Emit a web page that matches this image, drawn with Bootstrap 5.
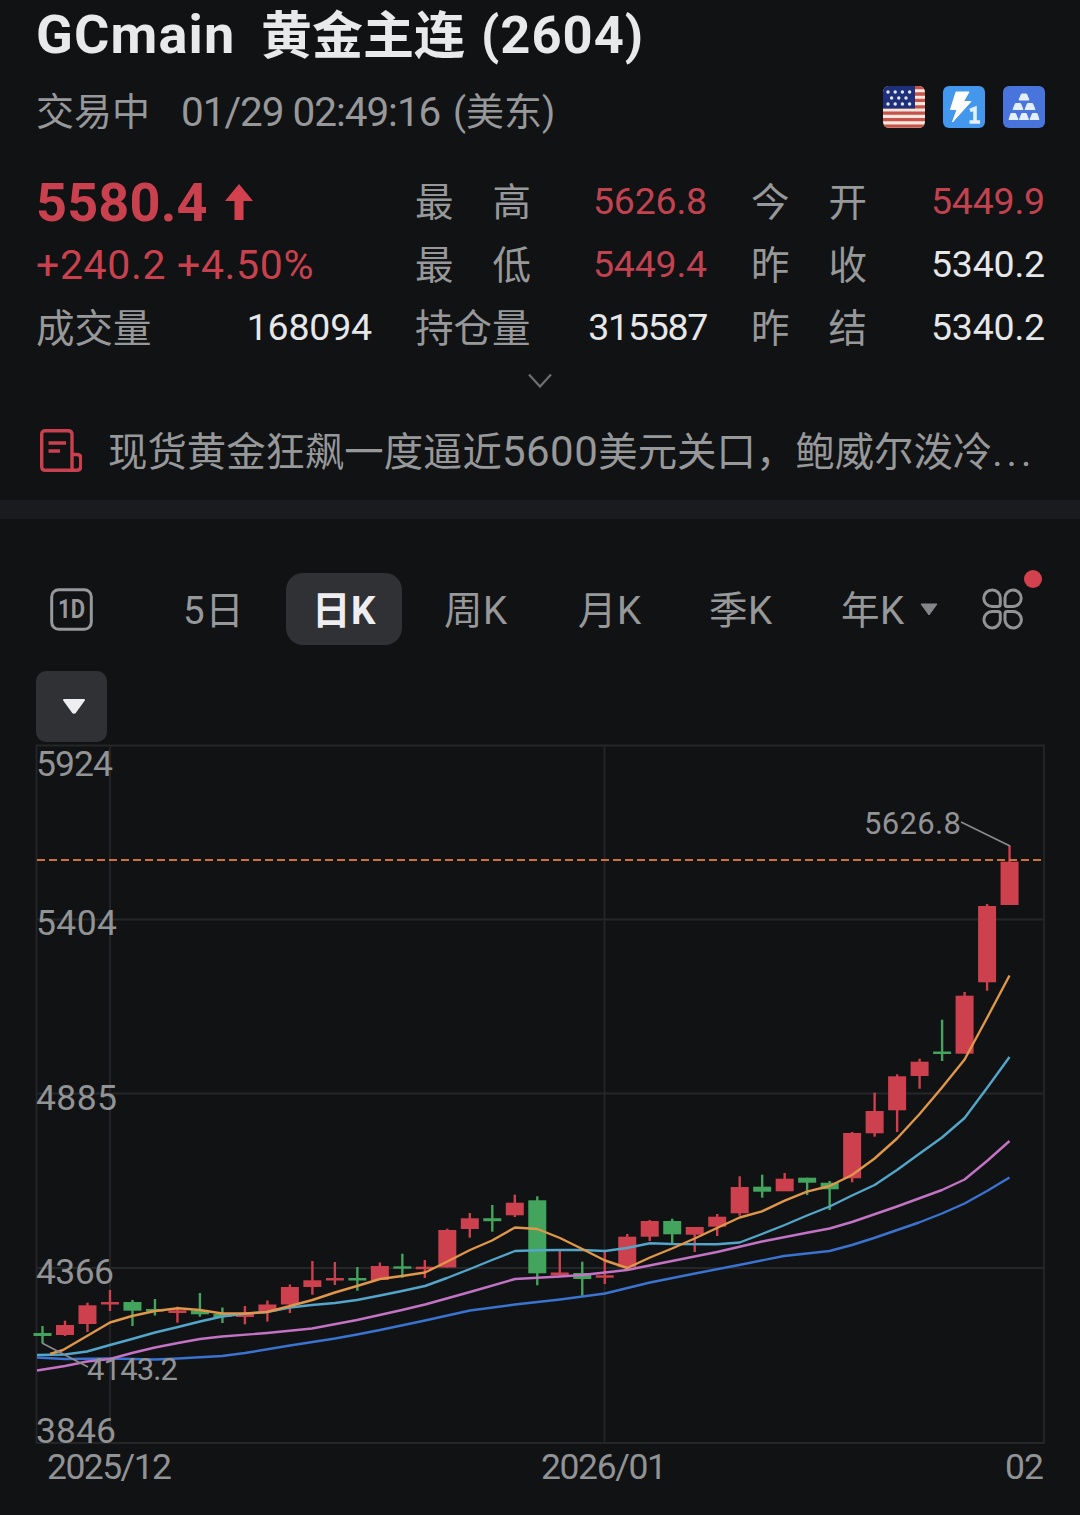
<!DOCTYPE html>
<html lang="zh-CN" data-bs-theme="dark">
<head>
<meta charset="utf-8">
<meta name="viewport" content="width=device-width, initial-scale=1">
<title>GCmain 黄金主连</title>
<link href="https://cdn.jsdelivr.net/npm/bootstrap@5.3.0/dist/css/bootstrap.min.css" rel="stylesheet">
<style>
  body { background: #111214; color: #97989a; font-family: Roboto, "Noto Sans CJK SC", sans-serif; font-size: 38.5px; overflow: hidden; }
  .quote-page { width: 1080px; height: 1515px; overflow: hidden; }
  .side-pad { padding-left: 36px; padding-right: 35px; }
  .title-line { height: 72px; line-height: 73px; font-size: 51px; color: #e8e9eb; white-space: pre; }
  .t-code { letter-spacing: 1.2px; width: 225px; font-size: 54px; line-height: 70px; }
  .t-num { letter-spacing: 1px; margin-left: 16px; font-size: 52.5px; line-height: 70px; }
  .status-line { height: 80px; line-height: 80px; font-size: 38px; white-space: pre; }
  .t-time { margin-left: 31px; font-size: 40.5px; letter-spacing: -1.05px; width: 272px; }
  .mkt-icons { gap: 18px; margin-top: 14px; }
  .mkt-icons svg { display: block; }
  .stats { margin-top: 19px; }
  .stat-row { height: 63px; line-height: 63px; }
  .c1 { width: 336px; margin-right: 43px; }
  .c2 { width: 292px; margin-right: 44px; }
  .c3 { width: 294px; }
  .lbl { width: 116px; }
  .up { color: #c9414f; }
  .val { font-size: 37.5px; letter-spacing: -.2px; line-height: 60px; color: #e6e7e9; }
  .val.up { color: #c14250; }
  .val.tight { letter-spacing: -1.3px; }
  .price { font-size: 54px; letter-spacing: .2px; }
  .chg { font-size: 41px; letter-spacing: .65px; white-space: pre; }
  .arrow-up { margin-bottom: 2px; margin-left: 16px; }
  .fold { height: 42px; padding-top: 13px; }
  .news { height: 98px; line-height: 60px; padding-top: 20px; }
  .news-icon { margin-top: 7px; }
  .news-txt { margin-left: 26px; font-size: 39.4px; white-space: nowrap; }
  .news-num { font-size: 42px; letter-spacing: .5px; }
  .news-dots { letter-spacing: 4px; }
  .split { height: 19px; background: #1a1b1e; }
  .tabs { height: 72px; margin-top: 54px; font-size: 38.5px; }
  .k { padding-top: 4px; line-height: 68px; letter-spacing: .5px; }
  .k svg { margin-bottom: 4px; margin-right: 42px; }
  .tab-on { width: 116px; height: 72px; border-radius: 17px; background: #303135; color: #eeeef0; }
  .drop { width: 71px; height: 71px; margin-top: 26px; border-radius: 10px; background: #303135; }
  .chart { display: block; }
  .chart text { font-size: 35.5px; fill: #929395; }
  .chart .extreme { font-size: 31px; }
  .dot { width: 18px; height: 18px; right: 2px; top: -3px; background: #d3414f; }
</style>
<script src="https://cdn.jsdelivr.net/npm/bootstrap@5.3.0/dist/js/bootstrap.bundle.min.js"></script>
</head>
<body>
<main class="quote-page d-flex flex-column">
  <header class="side-pad">
    <div class="title-line d-flex fw-bold"><span class="t-code">GCmain</span><span>黄金主连</span><span class="t-num">(2604)</span></div>
    <div class="status-line d-flex align-items-start justify-content-between">
      <div class="d-flex"><span>交易中</span><span class="t-time">01/29 02:49:16</span><span>(美东)</span></div>
      <div class="mkt-icons d-flex">
        <svg width="42" height="42" viewBox="0 0 42 42"><defs><clipPath id="fl"><rect width="42" height="42" rx="6"/></clipPath></defs>
          <g clip-path="url(#fl)"><rect width="42" height="42" fill="#f5e6df"/>
          <path d="M0 1.6H42M0 8H42M0 14.4H42M0 20.8H42M0 27.2H42M0 33.6H42M0 40.2H42" stroke="#c65349" stroke-width="3.3"/>
          <rect width="32" height="22.5" fill="#1d3079"/>
          <g fill="#e4e9f6"><circle cx="5" cy="6" r="1.7"/><circle cx="12.2" cy="6" r="1.7"/><circle cx="19.4" cy="6" r="1.7"/><circle cx="26.6" cy="6" r="1.7"/><circle cx="8.6" cy="12" r="1.7"/><circle cx="15.8" cy="12" r="1.7"/><circle cx="23" cy="12" r="1.7"/><circle cx="5" cy="18" r="1.7"/><circle cx="12.2" cy="18" r="1.7"/><circle cx="19.4" cy="18" r="1.7"/><circle cx="26.6" cy="18" r="1.7"/></g></g></svg>
        <svg width="42" height="42" viewBox="0 0 42 42"><rect width="42" height="42" rx="6" fill="#4397ec"/><path d="M13 6H26L20.500 15.500H28L9.500 36L14 23.500H7.500Z" fill="#fff" stroke="#fff" stroke-linejoin="round"/><path d="M27 24.500L32 22.500V36M26.500 36H37" fill="none" stroke="#e4f1fd" stroke-width="3.600"/></svg>
        <svg width="42" height="42" viewBox="0 0 42 42"><rect width="42" height="42" rx="6" fill="#4874db"/><g fill="#e3f0fc" stroke="#e3f0fc" stroke-linejoin="round"><path id="bar" d="M18.500 8H23.500L26 14H16Z"/><use href="#bar" x="-6" y="9.500"/><use href="#bar" x="6" y="9.500"/><path d="M8 27.500H12.500L15 33.500H6ZM18.800 27.500H23.200L25.500 33.500H16.500ZM29.500 27.500H34L36 33.500H27Z"/></g></svg>
      </div>
    </div>
  </header>

  <section class="stats side-pad">
    <div class="stat-row d-flex">
      <div class="c1 d-flex align-items-center"><span class="price up fw-bold">5580.4</span>
        <svg class="arrow-up" width="30" height="38" viewBox="0 0 30 38"><path d="M15 1L29 18H19.500V37H10.500V18H1Z" fill="#d3414f"/></svg></div>
      <div class="c2 d-flex justify-content-between"><span class="lbl d-flex justify-content-between"><span>最</span><span>高</span></span><span class="val up">5626.8</span></div>
      <div class="c3 d-flex justify-content-between"><span class="lbl d-flex justify-content-between"><span>今</span><span>开</span></span><span class="val up">5449.9</span></div>
    </div>
    <div class="stat-row d-flex">
      <div class="c1"><span class="chg up">+240.2 +4.50%</span></div>
      <div class="c2 d-flex justify-content-between"><span class="lbl d-flex justify-content-between"><span>最</span><span>低</span></span><span class="val up">5449.4</span></div>
      <div class="c3 d-flex justify-content-between"><span class="lbl d-flex justify-content-between"><span>昨</span><span>收</span></span><span class="val">5340.2</span></div>
    </div>
    <div class="stat-row d-flex">
      <div class="c1 d-flex justify-content-between"><span>成交量</span><span class="val">168094</span></div>
      <div class="c2 d-flex justify-content-between"><span>持仓量</span><span class="val tight">315587</span></div>
      <div class="c3 d-flex justify-content-between"><span class="lbl d-flex justify-content-between"><span>昨</span><span>结</span></span><span class="val">5340.2</span></div>
    </div>
  </section>

  <div class="fold d-flex justify-content-center">
    <svg width="26" height="16" viewBox="0 0 26 16"><path d="M2 1.500L13 13.500L24 1.500" fill="none" stroke="#6d6e70" stroke-width="2.200"/></svg>
  </div>

  <section class="news side-pad d-flex">
    <svg class="news-icon flex-shrink-0 ms-1" width="42" height="44" viewBox="0 0 42 44" fill="none" stroke="#c9414f" stroke-width="3.400"><path d="M32 41.300H5.500Q1.700 41.300 1.700 37.500V5.500Q1.700 1.700 5.500 1.700H28.200Q32 1.700 32 5.500ZM32 25.500H37Q40.700 25.500 40.700 29V37.500Q40.700 41.300 37 41.300H31M8.500 14H26M8.500 22H20"/></svg>
    <span class="news-txt">现货黄金狂飙一度逼近<span class="news-num">5600</span>美元关口，鲍威尔泼冷<span class="news-dots">...</span></span>
  </section>
  <div class="split"></div>

  <nav class="tabs side-pad d-flex flex-shrink-0">
    <span class="d-flex align-items-center" style="width:147px;padding-left:14px"><svg width="43" height="43" viewBox="0 0 43 43"><rect x="1.700" y="1.700" width="39.600" height="39.600" rx="7" fill="none" stroke="#97989a" stroke-width="3"/><text x="8" y="29.500" font-size="25" font-weight="700" fill="#97989a" textLength="27" lengthAdjust="spacingAndGlyphs">1D</text></svg></span>
    <span class="k" style="width:103px">5日</span>
    <span class="k tab-on text-center fw-bold">日K</span>
    <span class="k" style="width:134px;padding-left:42px">周K</span>
    <span class="k" style="width:132px;padding-left:42px">月K</span>
    <span class="k" style="width:132px;padding-left:41px">季K</span>
    <span class="k d-flex align-items-center" style="width:180px;padding-left:41px">年K<svg class="ms-auto" width="18" height="13" viewBox="0 0 18 13"><path d="M1 1H17L9 12Z" fill="#85868a" stroke="#85868a" stroke-linejoin="round"/></svg></span>
    <span class="position-relative d-flex align-items-center" style="width:64px"><svg style="margin-left:2px" width="42" height="42" viewBox="0 0 42 42" fill="none" stroke="#929395" stroke-width="3"><path d="M10 2A8 8 0 0 1 18.300 10.500V16Q18.300 18.400 16 18.400H10A8.200 8.200 0 0 1 10 2ZM31 2A8.200 8.200 0 0 1 31 18.400H25Q23 18.400 23 16V10A8 8 0 0 1 31 2ZM10 23.500H16Q18.300 23.500 18.300 26V31.500A8.200 8.200 0 1 1 10 23.500ZM25 23.500H31A8.200 8.200 0 1 1 23 31.500V26Q23 23.500 25 23.500Z"/></svg><i class="dot rounded-circle position-absolute"></i></span>
  </nav>

  <div class="side-pad"><div class="drop d-flex align-items-center justify-content-center"><svg class="ms-1" width="24" height="17" viewBox="0 0 24 17"><path d="M2 2H22L13.300 14Q12 15.500 10.700 14Z" fill="#eeeef0" stroke="#eeeef0" stroke-width="2" stroke-linejoin="round"/></svg></div></div>

  <svg class="chart flex-shrink-0" width="1080" height="773" viewBox="0 742 1080 773">
    <path d="M36.500 745.500H1044V1443H36.500ZM36.500 919.500H1044M36.500 1093.500H1044M36.500 1268H1044M110 745.500V1443M604.500 745.500V1443" fill="none" stroke="#252628" stroke-width="1.800"/>
    <g id="candles"></g>
    <path d="M37 860H1044" stroke="#cf7238" stroke-width="2" stroke-dasharray="8 4"/>
    <g id="averages" fill="none" stroke-width="2.400" stroke-linejoin="round"></g>
    <path d="M961 822L1010 846M42 1343L88 1367" stroke="#8b8c8e" stroke-width="1.600"/>
    <text x="36" y="776" textLength="77">5924</text>
    <text x="36" y="935" textLength="81">5404</text>
    <text x="36" y="1110" textLength="81">4885</text>
    <text x="36" y="1284" textLength="78">4366</text>
    <text x="36" y="1443" textLength="80">3846</text>
    <text x="47" y="1479" textLength="125">2025/12</text>
    <text x="541" y="1479" textLength="126">2026/01</text>
    <text x="1005" y="1479" textLength="39">02</text>
    <text class="extreme" x="864" y="834" textLength="97">5626.8</text>
    <text class="extreme" x="87" y="1380" textLength="91">4143.2</text>
  </svg>
</main>
<script>
// Each candle: body top, body bottom, wick top, wick bottom, 1 = rising / 0 = falling
const candles = [
[1333,1336,1326,1343,0],[1325,1335,1320.7,1336,1],[1305.3,1324,1302.7,1332,1],[1302,1304.5,1290,1311,1],[1302,1310.7,1300,1326,0],
[1309,1311.5,1299,1315.5,0],[1310.3,1313,1306.7,1322.7,1],[1310.5,1314.3,1293,1316.7,0],[1314,1317,1307.5,1323,0],[1314,1317,1306,1324.3,1],
[1304.5,1311.5,1300.5,1321.500,1],[1287,1304.5,1284.5,1313,1],[1280.3,1287,1261,1294.7,1],[1278,1280.500,1262,1285,1],[1278,1280.500,1267,1290.7,0],
[1266,1280,1262.5,1280,1],[1266.3,1268.700,1253.7,1277.7,0],[1266.7,1269.200,1260,1278,1],[1230,1267.5,1228.7,1267.5,1],[1218.3,1229,1213,1237.7,1],
[1218.200,1221.200,1205,1231.7,0],[1202.7,1215.3,1194.7,1217,1],[1200.3,1273.3,1196.3,1285.3,0],[1272.500,1275.500,1251,1276.5,1],[1273,1279,1261.7,1295.7,0],
[1275.3,1277.7,1250.7,1284,1],[1236.7,1267,1234,1270,1],[1221,1236.7,1220,1241,1],[1221,1234.3,1218.7,1245,0],[1227,1234.7,1227,1252,1],
[1216.7,1226.7,1214,1236,1],[1187,1213.3,1176.3,1215.7,1],[1186.7,1191.7,1174.7,1197.7,0],[1178.7,1191.3,1173,1191,1],[1177.7,1182.7,1177.7,1195,0],
[1182.7,1189.3,1181,1210,0],[1133,1178.3,1132,1182.3,1],[1111,1133.3,1092.7,1136.7,1],[1076.3,1110.3,1074.3,1132,1],[1061.7,1076,1058.7,1088.7,1],
[1051.500,1054,1019.7,1061,0],[995.7,1053.7,992,1053.7,1],[906,982.3,904,990.7,1],[861.7,905,845.7,905,1]];
document.getElementById('candles').innerHTML = candles.map(([t,b,h,l,up],i) => {
  const x = 42.5 + i*22.49, c = up ? '#cd404e' : '#43a45d';
  return `<path d="M${x} ${h}V${l}" stroke="${c}" stroke-width="2.4"/><rect x="${x-9}" y="${t}" width="18" height="${b-t}" fill="${c}"/>`;
}).join('');
// Moving averages, shortest period drawn last
const averages = [
['#3a73d0','37,1357.5 65,1359 110,1358.5 155,1359.5 178,1358.5 222,1356 245,1353 290,1345.5 335,1338.5 357,1334.5 380,1330 425,1320.5 470,1310.5 515,1304.5 560,1299.5 605,1293.5 650,1282.5 695,1273.5 739,1265 784,1256 829.6,1251 852,1245 874,1238 919,1222.5 942,1213.5 964.6,1203.5 987,1191 1009.5,1177.5'],
['#c373c4','37,1370.5 65,1366 87,1361.5 110,1359 132,1353 155,1347.5 178,1343 200,1339 222,1336.5 267,1333 312,1328.5 357,1320 402,1310 425,1304.5 470,1292 515,1279 560,1276.5 582,1275 605,1272.5 627,1270 672,1261 717,1252 762,1241.5 807,1232.7 829.6,1228.5 852,1222 897,1206.5 942,1190 964.6,1179.5 987,1161 1009.5,1141'],
['#53a6ca','37,1355 65,1354.5 87,1351.5 110,1345 132,1339 155,1332.5 178,1327 200,1321.5 222,1316.5 245,1313.7 267,1312 290,1307.5 312,1305 335,1303 357,1300 380,1295.5 402,1291 425,1286 447,1278 470,1269 492,1260 515,1251 537,1250.3 560,1250 582,1250 605,1251 627,1248 650,1243.3 672,1244 717,1244.3 739.7,1242.5 762,1234 784.7,1225 807,1215.5 829.6,1206.5 852,1195.5 874.6,1185 897,1170 919,1154 942,1137.5 964.6,1118 987,1088 1009.5,1057'],
['#e0974a','50,1354 63,1350 87,1336 110,1322.5 132,1316 155,1311 178,1308.3 200,1310 222,1313.5 245,1313.5 267,1312 290,1306 312.4,1300 334.9,1292.5 357,1286 380,1279 402,1276 425,1272.5 447.4,1261.5 470,1250 492,1240.5 515,1227.5 537.4,1229 560,1238 582.3,1249 605,1260.5 627.2,1268 650,1257.5 672,1248.5 694.7,1238.5 717,1228 739.7,1217.5 762,1211.3 784.7,1200.7 807,1191.7 829.6,1186 852,1175 874.6,1158.5 897,1138.5 919.6,1114 942,1087.5 964.6,1059.5 987,1018 1009.5,975.5']];
document.getElementById('averages').innerHTML = averages.map(([c,p]) => `<polyline points="${p}" stroke="${c}"/>`).join('');
</script>
</body>
</html>
